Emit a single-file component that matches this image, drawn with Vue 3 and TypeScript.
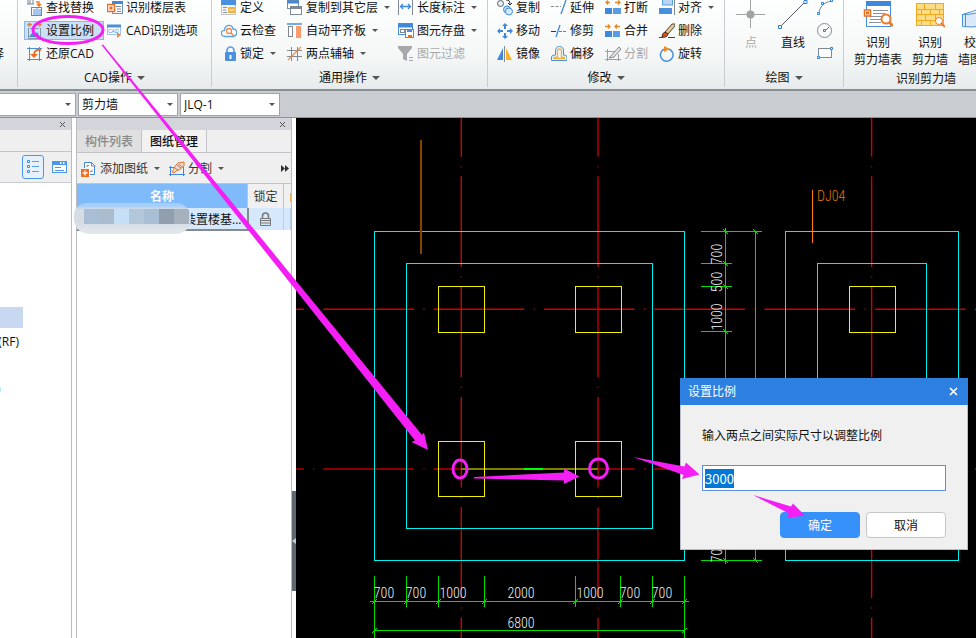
<script setup lang="ts">
import { onMounted, ref } from 'vue'

interface Tool {
  icon: string
  label: string
  menu?: boolean
  off?: boolean
  active?: boolean
}

interface ToolGroup {
  id: string
  title: string
  tools: Tool[]
}

const icons: Record<string, string> = {
  find: '<path d="M1 0v4M3 0v4M6 0v4M0 4h7" stroke="#7a8791" fill="none"/><path d="M9 2h3v3M10 4l2 2 2-2" stroke="#ee7b2c" stroke-width="1.5" fill="none"/><rect x="4.500" y="7.500" width="10" height="8" fill="#fff" stroke="#4a8fdb"/><path d="M6 10h3M6 12h3M6 14h3M11 10h3M11 12h3M11 14h3M10 7v9" stroke="#4a8fdb" fill="none"/>',
  floors: '<rect x="5.500" y="1.500" width="10" height="12" fill="#fff" stroke="#6b93bd"/><path d="M5 2.500h11" stroke="#3f88dc" stroke-width="3"/><path d="M9 6.500h5M10 9h4M10 11.500h4" stroke="#7a8791"/><rect x="0.500" y="4.500" width="7" height="7" fill="#fff" stroke="#ee6d1f" stroke-width="1.500"/><rect x="2.500" y="6.500" width="3" height="3" fill="#ee6d1f"/>',
  scale: '<path d="M5 1.500H1M3 0L1 1.500 3 3.500M10 1.500h4M12 0l2 1.500-2 2" stroke="#ee7b2c" stroke-width="1.300" fill="none"/><path d="M1.500 5v10.500h12V5M3 5.500h9" stroke="#8397ab" fill="none"/><path d="M2 14l4-5 2 2 2-2 3 5z" fill="#3f88dc"/>',
  cad: '<rect x="0.500" y="2.500" width="13" height="9" fill="#fff" stroke="#a6c6e8"/><path d="M0 3h14" stroke="#4a8fdb" stroke-width="3"/><text x="1" y="10" font-family="Liberation Sans" font-size="5" fill="#4a8fdb">CAD</text><path d="M10 9v6l4-3z" fill="#ee8a42"/>',
  restore: '<path d="M2.500 1v14M12.500 1v14M0 2.500h15M0 13.500h15" stroke="#4a8fdb" fill="none"/><path d="M14 4q-7-1-7 5" stroke="#ee6d1f" stroke-width="2" fill="none"/><path d="M3 8h8l-4 4z" fill="#ee6d1f"/>',
  define: '<rect x="0.500" y="0.500" width="14" height="14" fill="#f4f4f4" stroke="#c0c5cb"/><path d="M0 2.500h15" stroke="#4a90e0" stroke-width="5"/><path d="M2 7.500h4M2 10h3M2 12.500h4" stroke="#8a939c"/><rect x="7" y="7" width="7" height="6" fill="#f0b145"/><path d="M8 10h5" stroke="#fff"/>',
  cloud: '<path d="M4 13.500C-1 13-.5 7 3.500 7.500 4 1 11 1 12 6c5 0 5 7 0 7.500z" fill="#fff" stroke="#5aa0e8" stroke-width="1.300"/><circle cx="8" cy="8" r="2.500" fill="none" stroke="#ee8a42" stroke-width="1.300"/><path d="M10 10l3 3" stroke="#ee8a42" stroke-width="1.500"/>',
  lock: '<path d="M6 7V4.500a3.500 3.500 0 0 1 7 0V7" fill="none" stroke="#5a9be0" stroke-width="1.700"/><rect x="4" y="6" width="11" height="9" rx="1" fill="#4a90e0"/><path d="M9.500 9v4" stroke="#fff" stroke-width="2"/>',
  copyfloor: '<rect x="0.500" y="0.500" width="11" height="8" fill="#fff" stroke="#7f8a94"/><path d="M0 2h12" stroke="#3f88dc" stroke-width="3"/><rect x="3.500" y="6.500" width="11" height="8" fill="#fff" stroke="#7f8a94"/><path d="M3 7.500h12" stroke="#7f8a94" stroke-width="3"/>',
  board: '<path d="M0 1h15" stroke="#4a8fdb" stroke-width="1.500"/><rect x="1.500" y="3.500" width="4" height="10" fill="#fff" stroke="#7f8a94"/><rect x="9" y="3" width="5" height="12" fill="#fb9a6b"/>',
  axis: '<path d="M4.500 1v14M10.500 1v14M0 4.500h15M0 10.500h15" stroke="#7f8a94" fill="none"/><path d="M1 14L14 1" stroke="#ee8a42" stroke-width="1.300"/>',
  length: '<path d="M.5 0v15M14.500 0v15" stroke="#7f8a94"/><path d="M3 6.500h9M5 4L2.500 6.500 5 9M10 4l2.500 2.500L10 9" stroke="#3f88dc" stroke-width="1.300" fill="none"/>',
  save: '<rect x="0.500" y="0.500" width="14" height="11" fill="#fff" stroke="#4a8fdb"/><path d="M0 2.500h15" stroke="#3f88dc" stroke-width="4"/><rect x="2.500" y="6.500" width="4" height="3" fill="none" stroke="#7f8a94"/><rect x="7.500" y="6.500" width="8" height="8" fill="#fff" stroke="#4a8fdb"/><path d="M9 8h5" stroke="#4a8fdb" stroke-width="2"/><rect x="10" y="12" width="4" height="3" fill="#ee6d1f"/>',
  filter: '<path d="M0 0h14v2L9 8v7l-4-2V8L0 2z" fill="#a6a9ab"/><path d="M11 11.500h4M11 14.500h4" stroke="#a6a9ab"/>',
  copy: '<circle cx="3.500" cy="3.500" r="3" fill="#e8edf2" stroke="#56616b"/><path d="M9 0c3 0 4 1 4 4M11 3l2 2 2-2" stroke="#333" fill="none"/><circle cx="10" cy="9.500" r="3.500" fill="#b9dcf7" stroke="#3f88dc"/><circle cx="12" cy="11.500" r="3.500" fill="#d6ebfb" stroke="#3f88dc"/>',
  move: '<path d="M8 2v4M8 10v4M2 8h4M10 8h4" stroke="#3f88dc" stroke-width="2"/><path d="M5 3l3-3 3 3zM5 13l3 3 3-3zM3 5L0 8l3 3zM13 5l3 3-3 3z" fill="#3f88dc"/>',
  mirror: '<path d="M6 2v12H0z" fill="#3f88dc"/><path d="M7.500 0v16" stroke="#7f8a94"/><path d="M9 2v12h6z" fill="#f7b22c"/>',
  extend: '<path d="M0 6.500h10" stroke="#7f8a94" stroke-dasharray="3 1.500"/><path d="M15 0l-5 14" stroke="#3f88dc" stroke-width="1.300"/>',
  trim: '<path d="M0 8.500h5" stroke="#333"/><path d="M9 2L5 14" stroke="#3f88dc" stroke-width="1.300"/><path d="M8 8.500h8" stroke="#3f88dc" stroke-dasharray="3 1"/>',
  offset: '<path d="M.5 14.500V11q0-2 4-2V5q0-4.500 4-4.500T12.500 5v4q3.500 0 3.500 2v3.500z" fill="#eef5fc" stroke="#4a8fdb"/><path d="M3 12.500h10.500v-1H10.500V5q0-2-2-2t-2 2v6.500H3z" fill="none" stroke="#f7b22c" stroke-width="1.300"/>',
  break: '<path d="M5 2.500H1M3 .5L1 2.500l2 2M10 2.500h5M13 .5l2 2-2 2" stroke="#e08a2c" stroke-width="1.300" fill="none"/><rect x="0" y="8" width="7" height="6" fill="#3f88dc"/><rect x="8" y="8" width="8" height="6" fill="#5a9be6"/>',
  merge: '<path d="M0 3.500h5M3 1.500l2 2-2 2M15 3.500h-5M12 1.500l-2 2 2 2" stroke="#e08a2c" stroke-width="1.300" fill="none"/><rect x="0" y="8" width="7" height="6" fill="#3f88dc"/><rect x="8" y="8" width="7" height="6" fill="#5a9be6"/>',
  split: '<path d="M2.500 3v12M0 5.500h10M0 13.500h16M13.500 8v7" stroke="#9aa0a4" fill="none"/><path d="M4 12L14 1l2 2-7 8z" fill="#e2e4e5" stroke="#85898c"/>',
  align: '<rect x="3.500" y="-2" width="10" height="7" fill="#b9d6f5" stroke="#5a9be6"/><path d="M15.500 0v15" stroke="#7f8a94"/><rect x="0" y="8" width="13" height="6" fill="#4a8fdb"/>',
  erase: '<path d="M6 9l7-8 3 0v2L9 11z" fill="#e9c58c" stroke="#4d453d"/><path d="M6 9l3 2q-1 4-6 3Q3 10 6 9z" fill="#d9531e" stroke="#4d2a1a"/><path d="M0 14.500h4M9 14.500h7" stroke="#444"/>',
  rotate: '<path d="M10 3A6.300 6.300 0 1 1 5 3.200" fill="none" stroke="#4a8fdb" stroke-width="1.500"/><path d="M5 0v6l6-3z" fill="#ee8a22"/>',
}

const groups: ToolGroup[] = [
  {
    id: 'cad',
    title: 'CAD操作',
    tools: [
      { icon: 'find', label: '查找替换' },
      { icon: 'floors', label: '识别楼层表' },
      { icon: 'scale', label: '设置比例', active: true },
      { icon: 'cad', label: 'CAD识别选项' },
      { icon: 'restore', label: '还原CAD' },
    ],
  },
  {
    id: 'common',
    title: '通用操作',
    tools: [
      { icon: 'define', label: '定义' },
      { icon: 'copyfloor', label: '复制到其它层', menu: true },
      { icon: 'length', label: '长度标注', menu: true },
      { icon: 'cloud', label: '云检查' },
      { icon: 'board', label: '自动平齐板', menu: true },
      { icon: 'save', label: '图元存盘', menu: true },
      { icon: 'lock', label: '锁定', menu: true },
      { icon: 'axis', label: '两点辅轴', menu: true },
      { icon: 'filter', label: '图元过滤', off: true },
    ],
  },
  {
    id: 'modify',
    title: '修改',
    tools: [
      { icon: 'copy', label: '复制' },
      { icon: 'extend', label: '延伸' },
      { icon: 'break', label: '打断' },
      { icon: 'align', label: '对齐', menu: true },
      { icon: 'move', label: '移动' },
      { icon: 'trim', label: '修剪' },
      { icon: 'merge', label: '合并' },
      { icon: 'erase', label: '删除' },
      { icon: 'mirror', label: '镜像' },
      { icon: 'offset', label: '偏移' },
      { icon: 'split', label: '分割', off: true },
      { icon: 'rotate', label: '旋转' },
    ],
  },
]

/* Drawing geometry, in drawing units */
const columnAxes = [
  { x: 461.3, w: 1.4, c: '#d00000' },
  { x: 598, w: 2, c: '#860000' },
  { x: 871.6, w: 1.4, c: '#d00000' },
]
const columns = [
  { x: 438, y: 286, w: 46, h: 46 },
  { x: 575, y: 286, w: 46, h: 46 },
  { x: 438, y: 441, w: 46, h: 55 },
  { x: 575, y: 441, w: 46, h: 55 },
  { x: 849, y: 286, w: 46, h: 46 },
]
const footings = [
  { x: 374, y: 231, w: 310, h: 329 },
  { x: 406, y: 263, w: 246, h: 265 },
  { x: 785, y: 231, w: 173, h: 329 },
  { x: 817, y: 263, w: 109, h: 265 },
]
const bottomTicks = [374, 406, 438, 484, 575, 620, 652, 684]
const sideTicks = [231, 263, 286, 331, 560]
const bottomDims = [
  { x: 384, t: '700' },
  { x: 416, t: '700' },
  { x: 453, t: '1000' },
  { x: 521, t: '2000' },
  { x: 590, t: '1000' },
  { x: 630, t: '700' },
  { x: 662, t: '700' },
]
const sideDims = [
  { y: 254, t: '700' },
  { y: 282, t: '500' },
  { y: 317, t: '1000' },
  { y: 552, t: '700' },
]

const distance = ref('3000')
const distanceBox = ref<HTMLInputElement | null>(null)
const dialogOpen = ref(true)

onMounted(() => {
  distanceBox.value?.focus({ preventScroll: true })
  distanceBox.value?.select()
})
</script>

<template>
  <div class="app">
    <header class="ribbon">
      <div class="stub"><span>择</span></div>

      <section v-for="g in groups" :key="g.id" class="group" :class="g.id">
        <div class="tools">
          <button
            v-for="t in g.tools"
            :key="t.label"
            type="button"
            class="tool"
            :class="{ active: t.active }"
            :disabled="t.off"
          >
            <svg class="ico" viewBox="0 0 16 16" aria-hidden="true" v-html="icons[t.icon]"></svg>
            <span>{{ t.label }}</span>
            <i v-if="t.menu" class="caret"></i>
          </button>
        </div>
        <button type="button" class="title">{{ g.title }}<i class="caret wide"></i></button>
      </section>

      <section class="group draw">
        <div class="shapes">
          <button type="button" class="big" disabled>
            <svg class="pic" viewBox="0 0 30 30" aria-hidden="true">
              <path d="M14.500 0v29M0 15.500h29" stroke="#a3a3a3" />
              <circle cx="14.500" cy="15.500" r="4" fill="#a3a3a3" />
            </svg>
            <span>点</span>
          </button>
          <button type="button" class="big">
            <svg class="pic" viewBox="0 0 30 30" aria-hidden="true">
              <path d="M3 27L27 3" stroke="#555e66" />
              <path d="M.5 26.500h3v3h-3zM26 1.500h3v3h-3z" fill="#fff" stroke="#2f80d8" />
            </svg>
            <span>直线</span>
          </button>
          <div class="stack">
            <button type="button" class="mini" aria-label="弧">
              <svg viewBox="0 0 16 16" aria-hidden="true">
                <path d="M1.500 14Q3 3 14 1" fill="none" stroke="#7f8a94" />
                <path d="M.5 12.500h2v2h-2zM4.500 2.500h2v2h-2zM13.500-.5h2v2h-2z" fill="#fff" stroke="#2f80d8" />
              </svg>
            </button>
            <button type="button" class="mini" aria-label="圆">
              <svg viewBox="0 0 16 16" aria-hidden="true">
                <circle cx="7.500" cy="7.500" r="7" fill="none" stroke="#7f8a94" />
                <path d="M8 8l4-4" stroke="#2f80d8" />
                <path d="M6.500 6.500h2v2h-2z" fill="#fff" stroke="#2f80d8" />
              </svg>
            </button>
            <button type="button" class="mini" aria-label="矩形">
              <svg viewBox="0 0 16 16" aria-hidden="true">
                <rect x="1.500" y="2.500" width="13" height="9" fill="#fff" stroke="#7f8a94" />
                <path d="M.5 10.500h2v2h-2zM13.500 1.500h2v2h-2z" fill="#fff" stroke="#2f80d8" />
              </svg>
            </button>
          </div>
        </div>
        <button type="button" class="title">绘图<i class="caret wide"></i></button>
      </section>

      <section class="group wall">
        <div class="shapes">
          <button type="button" class="big">
            <svg class="pic" viewBox="0 0 30 30" aria-hidden="true">
              <rect x="3.500" y="4.500" width="24" height="23" fill="#fff" stroke="#4a8fdb" />
              <path d="M3 4.500h25" stroke="#3f88dc" stroke-width="5" />
              <path d="M10 11.500h15M10 14.500h12M7 17.500h12M7 20.500h11M6 23.500h12" stroke="#8a939c" />
              <rect x="1.500" y="11" width="6" height="6" fill="#fff" stroke="#ee6d1f" stroke-width="1.500" />
              <rect x="3" y="12.500" width="3" height="3" fill="#ee6d1f" />
              <circle cx="23" cy="20" r="4.500" fill="#fff" stroke="#ee7b2c" stroke-width="2" />
              <path d="M26 23l4 4" stroke="#ee7b2c" stroke-width="3" />
            </svg>
            <span>识别</span><span>剪力墙表</span>
          </button>
          <button type="button" class="big">
            <svg class="pic" viewBox="0 0 30 30" aria-hidden="true">
              <rect x="1.500" y="4.500" width="27" height="22" fill="#fddc86" stroke="#f2a91b" />
              <path
                d="M1 10.500h28M1 15.500h28M1 21.500h28M9.500 4v6M20.500 4v6M6.500 10v5M15.500 10v5M24.500 10v5M10.500 15v6M20.500 15v6M6.500 21v6M15.500 21v6"
                stroke="#f2a91b"
              />
              <circle cx="24" cy="22" r="3.500" fill="#fff" stroke="#ee7b2c" />
              <path d="M26 24l4 4" stroke="#ee7b2c" stroke-width="2" />
            </svg>
            <span>识别</span><span>剪力墙</span>
          </button>
          <button type="button" class="big">
            <svg class="pic" viewBox="0 0 30 30" aria-hidden="true">
              <path d="M1.500 15.500Q16 16 30 8v14q-10 6-18 6l-10.500-.5z" fill="#dbeafb" stroke="#4a8fdb" />
              <path d="M1.500 15.500Q12 13 22 8M4.500 16v11" fill="none" stroke="#4a8fdb" />
            </svg>
            <span>校核</span><span>墙图元</span>
          </button>
        </div>
        <div class="title">识别剪力墙</div>
      </section>
    </header>

    <nav class="selectors">
      <label class="combo first"><select aria-label="构件大类"><option></option></select><i class="caret"></i></label>
      <label class="combo"><select aria-label="构件类型"><option>剪力墙</option></select><i class="caret"></i></label>
      <label class="combo"><select aria-label="构件名称"><option>JLQ-1</option></select><i class="caret"></i></label>
    </nav>

    <main class="work">
      <aside class="side">
        <div class="bar">
          <button type="button" class="close" aria-label="关闭"><svg viewBox="0 0 7 7"><path d="M1 1l5 5M6 1L1 6" /></svg></button>
        </div>
        <div class="blank"></div>
        <div class="sidetools">
          <button type="button" class="view on" aria-label="列表">
            <svg viewBox="0 0 16 16">
              <path d="M2.500 1.500h2v2h-2zM2.500 6.500h2v2h-2zM2.500 11.500h2v2h-2z" fill="#fff" stroke="#3f88dc" />
              <path d="M7 2.500h7M7 7.500h7M7 12.500h7" stroke="#5aa0e8" />
            </svg>
          </button>
          <button type="button" class="view" aria-label="窗口">
            <svg viewBox="0 0 16 16">
              <rect x="0.500" y="2.500" width="14" height="11" fill="#fff" stroke="#4a97ea" />
              <path d="M0 4h15" stroke="#4a97ea" stroke-width="4" />
              <path d="M8 4h1.500M11 4h1.500" stroke="#fff" stroke-width="2" />
              <path d="M3 8.500h6M3 11.500h9" stroke="#4a97ea" />
            </svg>
          </button>
        </div>
        <ul class="tree">
          <li class="picked"></li>
          <li>(RF)</li>
          <li></li>
          <li><i class="mark"></i></li>
        </ul>
      </aside>

      <section class="drawings">
        <div class="bar">
          <button type="button" class="close" aria-label="关闭"><svg viewBox="0 0 7 7"><path d="M1 1l5 5M6 1L1 6" /></svg></button>
        </div>
        <div class="tabs">
          <button type="button">构件列表</button>
          <button type="button" class="current">图纸管理</button>
        </div>
        <div class="actions">
          <button type="button">
            <svg class="ico" viewBox="0 0 16 16" aria-hidden="true">
              <path d="M3.500 7V1.500h7l3 3v9H9" fill="#fff" stroke="#3f88dc" />
              <path d="M10.500 1v4h4M6 6V4.500h2M9 10.500h2v-2" fill="none" stroke="#7f8a94" />
              <rect x="0" y="8" width="8" height="8" fill="#ee6d1f" />
              <path d="M4 9.500v5M1.500 12h5" stroke="#fff" stroke-width="1.300" />
            </svg>
            <span>添加图纸</span><i class="caret"></i>
          </button>
          <button type="button">
            <svg class="ico" viewBox="0 0 16 16" aria-hidden="true">
              <path d="M1.500 5v10M14.500 6v9M0 6.500h5M0 13.500h16" fill="none" stroke="#3f88dc" />
              <path d="M3 11l4-7 2-2 6-1v4l-5 4-3 1-2 2z" fill="#f6d9c4" stroke="#d97432" />
              <path d="M8 4l4 3M10 3l3 3M6 7l3 2" stroke="#7f8a94" />
            </svg>
            <span>分割</span><i class="caret"></i>
          </button>
          <button type="button" class="more" aria-label="更多">
            <svg viewBox="0 0 8 7"><path d="M0 0l4 3.500L0 7zM4 0l4 3.500L4 7z" fill="#333" /></svg>
          </button>
        </div>
        <table>
          <colgroup><col /><col class="c-lock" /><col class="c-last" /></colgroup>
          <thead>
            <tr><th class="name">名称</th><th>锁定</th><th><i class="edge"></i></th></tr>
          </thead>
          <tbody>
            <tr>
              <td class="name"><span>装置楼基...</span></td>
              <td>
                <svg class="padlock" viewBox="0 0 13 14" role="img" aria-label="已锁定">
                  <path d="M3.500 6V4a3 3 0 0 1 6 0v2" fill="none" stroke="#777" stroke-width="1.500" />
                  <path d="M1.500 6.500h10v7h-10zM2 8.500h9M2 11h9" fill="none" stroke="#777" />
                </svg>
              </td>
              <td></td>
            </tr>
          </tbody>
        </table>
        <div class="smudge"><b></b><b></b><b></b><b></b><b></b><b></b><b></b></div>
      </section>

      <div class="splitter">
        <button type="button" aria-label="收起"><svg viewBox="0 0 4 6"><path d="M4 0v6L0 3z" fill="#c5cbd0" /></svg></button>
      </div>

      <section class="canvas">
        <svg class="model" viewBox="296 118 680 520" preserveAspectRatio="xMinYMin meet">
          <g fill="none" stroke-dasharray="90.700 9.500 1 9.100">
            <path
              v-for="a in columnAxes"
              :key="a.x"
              :d="`M${a.x} 66V638`"
              :stroke="a.c"
              :stroke-width="a.w"
            />
            <path d="M213 309.300H976" stroke="#d00000" stroke-width="1.400" />
            <path d="M213 469H976" stroke="#860000" stroke-width="2" />
          </g>
          <g fill="none" stroke="#00f0f0">
            <rect v-for="(f, i) in footings" :key="i" :x="f.x + 0.5" :y="f.y + 0.5" :width="f.w" :height="f.h" />
          </g>
          <path d="M461 469h137" stroke="#808000" stroke-width="2" />
          <path d="M524 469h19" stroke="#00ff00" stroke-width="2" />
          <g fill="none" stroke="#f0f000">
            <rect v-for="(c, i) in columns" :key="i" :x="c.x + 0.5" :y="c.y + 0.5" :width="c.w" :height="c.h" />
          </g>
          <path d="M421 140v114" stroke="#864300" stroke-width="2" />
          <path d="M812.500 190v53" stroke="#ff8000" />
          <g fill="none" stroke="#00e000">
            <path d="M370 601.500h319M374 630.500h311M725.500 228v336M755.500 231v330" />
            <path
              v-for="x in bottomTicks"
              :key="x"
              :d="`M${x + 0.5} 576V${x === 374 || x === 684 ? 638 : 607}M${x - 2} 604l5-5`"
            />
            <path
              v-for="y in sideTicks"
              :key="y"
              :d="`M701 ${y + 0.5}H${y === 231 || y === 560 ? 762 : 732}M723 ${y - 2}l5 5`"
            />
            <path d="M372 633l5-5M682 633l5-5M753 229l5 5M753 558l5 5" />
          </g>
          <g class="dims" text-anchor="middle">
            <text v-for="d in bottomDims" :key="d.x" :x="d.x" y="598">{{ d.t }}</text>
            <text x="521" y="628">6800</text>
            <text v-for="d in sideDims" :key="d.y" :transform="`translate(722 ${d.y}) rotate(-90)`">{{ d.t }}</text>
          </g>
          <text class="tag" x="817" y="201">DJ04</text>
        </svg>

        <form v-if="dialogOpen" class="dialog" role="dialog" aria-labelledby="dlg-title" @submit.prevent="dialogOpen = false">
          <div class="dlg-head">
            <span id="dlg-title">设置比例</span>
            <button type="button" aria-label="关闭" @click="dialogOpen = false">
              <svg viewBox="0 0 9 9"><path d="M1 1l7 7M8 1L1 8" stroke="#fff" stroke-width="1.700" /></svg>
            </button>
          </div>
          <div class="dlg-body">
            <label for="distance">输入两点之间实际尺寸以调整比例</label>
            <input id="distance" ref="distanceBox" v-model="distance" type="text" autocomplete="off" />
            <div class="dlg-foot">
              <button type="submit" class="primary">确定</button>
              <button type="button" @click="dialogOpen = false">取消</button>
            </div>
          </div>
        </form>
      </section>
    </main>

    <svg class="notes" viewBox="0 0 976 638" preserveAspectRatio="xMinYMin meet" aria-hidden="true">
      <g fill="none" stroke="#f41ff4" stroke-width="3">
        <ellipse cx="68" cy="30" rx="35" ry="13.500" />
        <ellipse cx="460" cy="469" rx="7" ry="9" />
        <ellipse cx="598.500" cy="468.500" rx="9" ry="9.500" />
      </g>
      <g fill="#f41ff4">
        <path d="M101.500 45L103 44.500 422 435l2-2.500 4 17.500-16.500-8 3.500-1.500z" />
        <path d="M474 477l90-4.500v-4l15.500 8L564 484v-3.500l-90-2z" />
        <path d="M633 457l51.500 9.500 1.500-4 13.500 12-17.500 4.500 1.500-4z" />
        <path d="M753 495l38 11.500 2-3 12 12-18 2.500 2-4.500z" />
      </g>
    </svg>
  </div>
</template>

<style>
html,
body,
#app {
  height: 100%;
}
body {
  overflow: hidden;
}
</style>

<style scoped>
.app {
  position: relative;
  display: flex;
  flex-direction: column;
  height: 100%;
  overflow: hidden;
  background: #fff;
  color: #111;
  font: 12px/16px "Open Sans", "Noto Sans CJK SC", sans-serif;
}
* {
  box-sizing: border-box;
}
button {
  margin: 0;
  padding: 0;
  border: 0;
  background: none;
  color: inherit;
  font: inherit;
  white-space: nowrap;
}
svg {
  display: block;
  flex: none;
}
.ico {
  width: 16px;
  height: 16px;
}
.caret {
  flex: none;
  border: 3px solid transparent;
  border-top-color: #555;
  border-bottom: 0;
  margin-left: 3px;
}
.caret.wide {
  border-width: 4px 4px 0;
  margin-left: 5px;
}

/* Ribbon, scrolled up by a few pixels */
.ribbon {
  flex: none;
  display: flex;
  height: 91px;
  overflow: hidden;
  border-bottom: 2px solid #879094;
  background: linear-gradient(#fdfefe, #f6f8f8 60%, #e7ebeb);
}
.stub,
.group {
  flex: none;
  height: 91px;
  margin-top: -4px;
  border-right: 1px solid #c9cdcf;
}
.stub {
  display: flex;
  justify-content: flex-end;
  width: 18px;
  padding: 50px 13px 0 0;
}
.tools {
  display: grid;
  grid-auto-rows: 23px;
  height: 69px;
  padding-left: 6px;
}
.cad {
  width: 194px;
}
.cad .tools {
  grid-template-columns: 80px 1fr;
}
.common {
  width: 276px;
}
.common .tools {
  grid-template-columns: 66px 111px 1fr;
}
.modify {
  width: 237px;
}
.modify .tools {
  grid-template-columns: 54px 54px 54px 1fr;
}
.tool {
  display: flex;
  align-items: center;
  gap: 3px;
  padding: 0 2px;
  border: 1px solid transparent;
}
.tool.active {
  margin: 2px 0;
  border-color: #8db5e2;
  background: #cbe0f7;
}
button:disabled {
  color: #a9a9a9;
}
.title {
  display: flex;
  align-items: center;
  justify-content: center;
  width: 100%;
  height: 25px;
}
.draw {
  width: 119px;
}
.wall {
  width: 164px;
  border-right: 0;
}
.shapes {
  display: flex;
  height: 69px;
}
.wall .shapes {
  padding-left: 8px;
}
.big {
  display: flex;
  flex-direction: column;
  align-items: center;
  width: 52px;
  flex: none;
}
.big span {
  line-height: 17px;
}
.pic {
  width: 30px;
  height: 30px;
  margin: 3px 0 5px;
}
.draw .big:nth-child(2) {
  width: 32px;
}
.wall .big:last-child {
  width: 40px;
}
.wall .title {
  height: 28px;
}
.stack {
  display: flex;
  flex-direction: column;
  margin-left: 8px;
}
.mini {
  height: 23px;
}
.mini svg {
  width: 16px;
  height: 16px;
}

/* Selector strip */
.selectors {
  flex: none;
  display: flex;
  gap: 2px;
  height: 27px;
  padding: 2px 0 1px;
  border-bottom: 1px solid #8c9093;
  background: #c9ccd0;
}
.combo {
  position: relative;
  width: 100px;
}
.combo.first {
  width: 76px;
}
.combo select {
  appearance: none;
  display: block;
  width: 100%;
  height: 23px;
  padding: 0 3px;
  border: 1px solid #9fa4a8;
  border-radius: 0;
  background: #fff;
  color: #111;
  font: inherit;
}
.combo.first select {
  border-left: 0;
}
.combo .caret {
  position: absolute;
  top: 10px;
  right: 5px;
}

/* Work area */
.work {
  flex: 1;
  display: flex;
  min-height: 0;
}
.side {
  flex: none;
  width: 72px;
  margin-right: 4px;
  border-right: 1px solid #b9bbbe;
}
.bar {
  display: flex;
  align-items: center;
  justify-content: flex-end;
  height: 12px;
  padding-right: 5px;
  background: #d4d5da;
}
.close svg {
  width: 7px;
  height: 7px;
  fill: none;
  stroke: #555;
}
.blank {
  height: 22px;
  border-bottom: 1px solid #c2c4c8;
  background: #efefef;
}
.sidetools {
  display: flex;
  align-items: center;
  justify-content: flex-end;
  gap: 6px;
  height: 31px;
  padding-right: 1px;
  border-bottom: 1px solid #c9cbcf;
  background: #efefef;
}
.view {
  display: flex;
  align-items: center;
  justify-content: center;
  width: 20px;
  height: 24px;
}
.view.on {
  width: 22px;
  border: 1px solid #4a97ea;
  border-radius: 3px;
  background: #e6f1fc;
}
.view svg {
  width: 16px;
  height: 16px;
}
.tree {
  margin: 0;
  padding: 122px 0 0;
  list-style: none;
}
.tree li {
  display: flex;
  align-items: center;
  justify-content: flex-end;
  width: 23px;
  height: 24px;
  padding: 1px 4px 0 0;
}
.tree .picked {
  border: solid #fff;
  border-width: 2px 0 1px;
  background: #c8d8f0;
}
.mark {
  width: 5px;
  height: 5px;
  margin-right: 18px;
  border-radius: 50%;
  background: #9feaf8;
}

.drawings {
  position: relative;
  flex: none;
  width: 216px;
  border: solid #b9bbbe;
  border-width: 0 1px;
}
.tabs {
  display: flex;
  height: 23px;
  border-bottom: 1px solid #c2c4c8;
  background: #efefef;
}
.tabs button {
  width: 65px;
  padding-top: 2px;
  border-right: 1px solid #c2c4c8;
  background: #e0e0e0;
  color: #888;
  font-weight: 500;
}
.tabs .current {
  background: #f2f2f2;
  color: #111;
}
.actions {
  display: flex;
  align-items: center;
  gap: 9px;
  height: 31px;
  padding: 1px 2px 0 4px;
  border-bottom: 1px solid #c2c4c8;
  background: #efefef;
  color: #333;
}
.actions button {
  display: flex;
  align-items: center;
  gap: 3px;
}
.actions .more {
  margin-left: auto;
}
.more svg {
  width: 8px;
  height: 7px;
}
table {
  width: 100%;
  table-layout: fixed;
  border-collapse: collapse;
}
.c-lock {
  width: 36px;
}
.c-last {
  width: 7px;
}
th {
  height: 24px;
  padding: 2px 0 0;
  border-right: 1px solid #c2c4c8;
  background: #f0f0f0;
  color: #333;
  font-weight: 400;
  white-space: nowrap;
}
th:last-child {
  border-right: 0;
}
th.name {
  background: #7fbafb;
  color: #fff;
  font-weight: 700;
}
.edge {
  display: block;
  width: 1px;
  height: 9px;
  margin-left: auto;
  background: #e0b060;
}
td {
  height: 22px;
  padding: 0;
  border-right: 1px solid #b8cfe6;
  background: #d6e9fc;
}
td.name {
  border: 2px solid #858a8f;
  border-width: 0 2px 2px 0;
  text-align: right;
  padding: 2px 5px 0 0;
}
.padlock {
  width: 13px;
  height: 14px;
  margin: 0 auto;
}
.smudge {
  position: absolute;
  left: -3px;
  top: 85px;
  display: flex;
  width: 117px;
  height: 31px;
  padding: 6px 0 0 10px;
  overflow: hidden;
  border-radius: 12px 15px 15px 15px;
  background: linear-gradient(#a5cefa 10%, #d5dce4 20%, #d5dce4 60%, #e4e8ec);
}
.smudge b {
  flex: none;
  width: 15px;
  height: 15px;
  background: #a9bdd4;
}
.smudge b:nth-child(2) {
  background: #aabccd;
}
.smudge b:nth-child(3) {
  background: #c5dff7;
}
.smudge b:nth-child(4) {
  background: #b3c7da;
}
.smudge b:nth-child(5) {
  background: #a8bed4;
}
.smudge b:nth-child(6) {
  background: #909fad;
}
.smudge b:nth-child(7) {
  background: #a5b1bd;
}

.splitter {
  flex: none;
  display: flex;
  align-items: flex-end;
  width: 4px;
  padding-bottom: 47px;
}
.splitter button {
  display: flex;
  align-items: center;
  width: 4px;
  height: 100px;
  background: #5d6873;
}
.splitter svg {
  width: 4px;
  height: 6px;
}

.canvas {
  position: relative;
  flex: 1;
  min-width: 0;
  overflow: hidden;
  background: #000;
}
.model {
  width: 100%;
  height: 100%;
}
.dims,
.tag {
  fill: #f0f0f0;
  font: 300 14px "Roboto Condensed", "Roboto", sans-serif;
}
.tag {
  fill: #e07800;
}

/* Dialog floating above the drawing */
.dialog {
  position: absolute;
  left: 384px;
  top: 260px;
  width: 288px;
  border: 1px solid #b4bccb;
  border-top: 0;
  background: #f0f0f0;
}
.dlg-head {
  display: flex;
  align-items: center;
  justify-content: space-between;
  height: 27px;
  margin: 0 -1px;
  padding: 0 10px 0 8px;
  background: #2d7fe0;
  color: #fff;
}
.dlg-head svg {
  width: 9px;
  height: 9px;
}
.dlg-body {
  display: flex;
  flex-direction: column;
  padding: 23px 21px 11px;
}
.dlg-body input {
  height: 26px;
  margin: 21px 0;
  padding: 0 2px;
  border: 1px solid #5b8fd9;
  outline: 0;
  background: #fff;
  color: #111;
  font: 13px/17px "Noto Sans CJK SC", sans-serif;
}
.dlg-body input::selection {
  background: #0078d7;
  color: #fff;
}
.dlg-foot {
  display: flex;
  justify-content: flex-end;
  gap: 6px;
}
.dlg-foot button {
  width: 80px;
  height: 26px;
  padding-top: 2px;
  border: 1px solid #c6c6c6;
  border-radius: 4px;
  background: #fff;
}
.dlg-foot .primary {
  border-color: #3791fa;
  background: #3791fa;
  color: #fff;
}

.notes {
  position: absolute;
  inset: 0;
  width: 100%;
  height: 100%;
  pointer-events: none;
}
</style>
